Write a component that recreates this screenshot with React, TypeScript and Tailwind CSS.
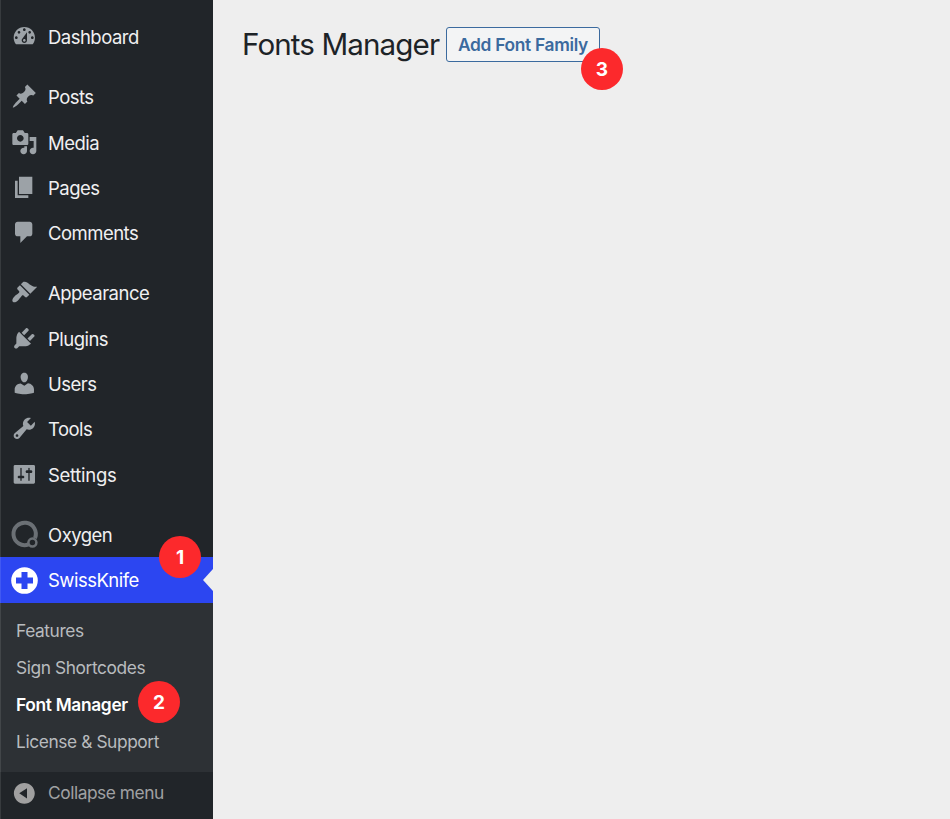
import type { ReactNode } from "react";

const icons = {
  dashboard:
    "M3.76 16h12.48c1.1-1.37 1.76-3.11 1.76-5 0-4.42-3.58-8-8-8s-8 3.58-8 8c0 1.89.66 3.63 1.76 5zM10 4c.55 0 1 .45 1 1s-.45 1-1 1-1-.45-1-1 .45-1 1-1zM6 6c.55 0 1 .45 1 1s-.45 1-1 1-1-.45-1-1 .45-1 1-1zm8 0c.55 0 1 .45 1 1s-.45 1-1 1-1-.45-1-1 .45-1 1-1zm-5.37 5.55L12 7v6c0 1.1-.9 2-2 2s-2-.9-2-2c0-.57.24-1.08.63-1.45zM4 10c.55 0 1 .45 1 1s-.45 1-1 1-1-.45-1-1 .45-1 1-1zm12 0c.55 0 1 .45 1 1s-.45 1-1 1-1-.45-1-1 .45-1 1-1zm-5 3c0-.55-.45-1-1-1s-1 .45-1 1 .45 1 1 1 1-.45 1-1z",
  posts:
    "M10.44 3.02l1.82-1.82 6.36 6.35-1.83 1.82c-1.05-.68-2.48-.57-3.41.36l-.75.75c-.92.93-1.04 2.35-.35 3.41l-1.83 1.82-2.41-2.41-2.8 2.79c-.42.42-3.38 2.71-3.8 2.29s1.86-3.39 2.28-3.81l2.79-2.79L4.1 9.36l1.83-1.82c1.05.69 2.48.57 3.4-.36l.75-.75c.93-.92 1.05-2.35.36-3.41z",
  media:
    "M13 11V4c0-.55-.45-1-1-1h-1.67L9 1H5L3.67 3H2c-.55 0-1 .45-1 1v7c0 .55.45 1 1 1h10c.55 0 1-.45 1-1zM7 4.5c1.38 0 2.5 1.12 2.5 2.5S8.38 9.5 7 9.5 4.5 8.38 4.5 7 5.62 4.5 7 4.5zM14 6h5v10.5c0 1.38-1.12 2.5-2.5 2.5S14 17.88 14 16.5s1.12-2.5 2.5-2.5c.17 0 .34.02.5.05V9h-3V6zm-4 8.05V13h2v3.5c0 1.38-1.12 2.5-2.5 2.5S7 17.88 7 16.5 8.12 14 9.5 14c.17 0 .34.02.5.05z",
  pages: "M6 15V2h10v13H6zm-1 1h8v2H3V5h2v11z",
  comments:
    "M5 2h9c1.1 0 2 .9 2 2v7c0 1.1-.9 2-2 2h-2l-5 5v-5H5c-1.1 0-2-.9-2-2V4c0-1.1.9-2 2-2z",
  appearance:
    "M14.48 11.06L7.41 3.99l1.5-1.5c.5-.56 2.3-.47 3.51.32 1.21.8 1.43 1.28 2.91 2.1 1.18.64 2.45 1.26 4.45.85zm-.71.71L6.7 4.7 4.93 6.47c-.39.39-.39 1.02 0 1.41l1.06 1.06c.39.39.39 1.03 0 1.42-.6.6-1.43 1.11-2.21 1.69-.35.26-.7.53-1.01.84C1.43 14.23.4 16.08 1.4 17.07c.99 1 2.84-.03 4.18-1.36.31-.31.58-.66.85-1.02.57-.78 1.08-1.61 1.69-2.21.39-.39 1.02-.39 1.41 0l1.06 1.06c.39.39 1.02.39 1.41 0z",
  plugins:
    "M13.11 4.36L9.87 7.6 8 5.73l3.24-3.24c.35-.34 1.05-.2 1.56.32.52.51.66 1.21.31 1.55zm-8 1.77l.91-1.12 9.01 9.01-1.19.84c-.71.71-2.63 1.16-3.82 1.16H6.14L4.9 17.26c-.59.59-1.54.59-2.12 0-.59-.58-.59-1.53 0-2.12l1.24-1.24v-3.88c0-1.13.4-3.19 1.09-3.89zm7.26 3.97l3.24-3.24c.34-.35 1.04-.21 1.55.31.52.51.66 1.21.31 1.55l-3.24 3.25z",
  users:
    "M10 9.25c-2.27 0-2.73-3.44-2.73-3.44C7 4.02 7.82 2 9.97 2c2.16 0 2.98 2.02 2.71 3.81 0 0-.41 3.44-2.68 3.44zm0 2.57L12.72 10c2.39 0 4.52 2.33 4.52 4.53v2.49s-3.65 1.13-7.24 1.13c-3.65 0-7.24-1.13-7.24-1.13v-2.49c0-2.25 1.94-4.48 4.47-4.48z",
  tools:
    "M16.68 9.77c-1.34 1.34-3.3 1.67-4.95.99l-5.41 6.52c-.99.99-2.59.99-3.58 0s-.99-2.59 0-3.57l6.52-5.42c-.68-1.65-.35-3.61.99-4.95 1.28-1.28 3.12-1.62 4.72-1.06l-2.89 2.89 2.82 2.82 2.86-2.87c.53 1.58.18 3.39-1.08 4.65zM3.81 16.21c.4.39 1.04.39 1.43 0 .4-.4.4-1.04 0-1.43-.39-.4-1.03-.4-1.43 0-.39.39-.39 1.03 0 1.43z",
  settings:
    "M18 16V4c0-.55-.45-1-1-1H3c-.55 0-1 .45-1 1v12c0 .55.45 1 1 1h14c.55 0 1-.45 1-1zM8 11h1c.55 0 1 .45 1 1s-.45 1-1 1H8v1.5c0 .28-.22.5-.5.5s-.5-.22-.5-.5V13H6c-.55 0-1-.45-1-1s.45-1 1-1h1V5.5c0-.28.22-.5.5-.5s.5.22.5.5V11zm5-2h-1c-.55 0-1-.45-1-1s.45-1 1-1h1V5.5c0-.28.22-.5.5-.5s.5.22.5.5V7h1c.55 0 1 .45 1 1s-.45 1-1 1h-1v5.5c0 .28-.22.5-.5.5s-.5-.22-.5-.5V9z",
};

function Dashicon({ d }: { d: string }) {
  return (
    <svg viewBox="0 0 20 20" className="mb-[1.5px] size-[26.67px] fill-[#9ca2a7]" fillRule="evenodd">
      <path d={d} />
    </svg>
  );
}

function OxygenIcon() {
  return (
    <svg viewBox="0 0 27 27" className="size-[27px] overflow-visible" fill="none" stroke="#6b7075">
      <path d="M17.6 23.4A11.2 11.2 0 1 1 24 17.2" strokeWidth="4" />
      <circle cx="21.4" cy="21.6" r="4" strokeWidth="2.5" />
    </svg>
  );
}

function SwissIcon() {
  return (
    <svg viewBox="0 0 27 27" className="mt-px size-[27px]">
      <circle cx="13.5" cy="13.5" r="13.3" fill="#fff" />
      <path d="M10.5 5h6v5.5H22v6h-5.5V22h-6v-5.5H5v-6h5.5z" fill="#2c46f1" />
    </svg>
  );
}

function Item({ icon, children, className = "" }: { icon: ReactNode; children: ReactNode; className?: string }) {
  return (
    <a className={`relative flex h-[45.33px] items-center text-[18.5px] text-[#f0f0f1] ${className}`}>
      <span className="flex w-12 justify-center">{icon}</span>
      <span className="pt-[2px]">{children}</span>
    </a>
  );
}

function Badge({ n, className }: { n: number; className: string }) {
  return (
    <span
      className={`absolute z-10 flex size-[42px] items-center justify-center rounded-full bg-[#fc292c] pt-[2px] text-[19px] font-bold tracking-normal text-white ${className}`}
    >
      {n}
    </span>
  );
}

export default function App() {
  return (
    <div className="flex h-[819px] w-[950px] overflow-hidden bg-[#eeeeee] font-['Inter','Liberation_Sans',sans-serif]">
      <aside className="relative w-[213px] shrink-0 bg-[#212529] pt-[14.67px] tracking-[-0.52px]">
        <span className="absolute inset-y-0 left-0 z-10 w-px bg-white/10" />
        <nav className="flex flex-col">
          <Item icon={<Dashicon d={icons.dashboard} />}>Dashboard</Item>
          <div className="mt-[14.67px]">
            <Item icon={<Dashicon d={icons.posts} />}>Posts</Item>
            <Item icon={<Dashicon d={icons.media} />}>Media</Item>
            <Item icon={<Dashicon d={icons.pages} />}>Pages</Item>
            <Item icon={<Dashicon d={icons.comments} />}>Comments</Item>
          </div>
          <div className="mt-[14.67px]">
            <Item icon={<Dashicon d={icons.appearance} />}>Appearance</Item>
            <Item icon={<Dashicon d={icons.plugins} />}>Plugins</Item>
            <Item icon={<Dashicon d={icons.users} />}>Users</Item>
            <Item icon={<Dashicon d={icons.tools} />}>Tools</Item>
            <Item icon={<Dashicon d={icons.settings} />}>
              <span className="tracking-[-0.3px]">Settings</span>
            </Item>
          </div>
          <div className="mt-[14.67px]">
            <Item icon={<OxygenIcon />}>Oxygen</Item>
            <Item icon={<SwissIcon />} className="bg-[#2c46f1] text-white">
              SwissKnife
              <svg viewBox="0 0 10 22" className="absolute top-[12px] right-0 h-[22px] w-[10px] fill-[#eeeeee]">
                <path d="M10 0v22L0 11z" />
              </svg>
              <Badge n={1} className="top-[-21px] left-[159px]" />
            </Item>
          </div>
          <div className="flex h-[169px] flex-col bg-[#2d3135] pt-[9.5px] pl-4 text-[17.33px] tracking-[-0.4px] text-[#b8bbbe]">
            <a className="flex h-[37px] items-center">Features</a>
            <a className="flex h-[37px] items-center">Sign Shortcodes</a>
            <a className="relative flex h-[37px] items-center font-semibold tracking-[-0.32px] text-white">
              Font Manager
              <Badge n={2} className="top-[-5px] left-[122px]" />
            </a>
            <a className="flex h-[37px] items-center">License &amp; Support</a>
          </div>
          <div className="flex h-[43px] items-center text-[17.33px] tracking-[-0.45px] text-[#a0a1a3]">
            <span className="flex w-12 justify-center">
              <svg viewBox="0 0 20 20" className="size-[26.67px] fill-[#a0a0a0]">
                <path
                  fillRule="evenodd"
                  d="M10 2.16c4.33 0 7.84 3.51 7.84 7.84s-3.51 7.84-7.84 7.84S2.16 14.33 2.16 10 5.71 2.16 10 2.16zm2 11.72V6.12L6.18 9.97z"
                />
              </svg>
            </span>
            Collapse menu
          </div>
        </nav>
      </aside>
      <main className="flex-1 pt-[27px] pl-[29px]">
        <div className="flex items-center">
          <h1 className="w-[204px] text-[29.6px] leading-[35px] tracking-[-0.9px] whitespace-nowrap text-[#1d2327]">Fonts Manager</h1>
          <a className="relative flex h-[35px] w-[154px] items-center justify-center rounded-[3px] border border-[#3b6a9e] bg-[#f3f4f5] text-[17.33px] font-semibold tracking-[-0.3px] whitespace-nowrap text-[#3b6a9e]">
            Add Font Family
            <Badge n={3} className="top-[20px] left-[134px]" />
          </a>
        </div>
      </main>
    </div>
  );
}
